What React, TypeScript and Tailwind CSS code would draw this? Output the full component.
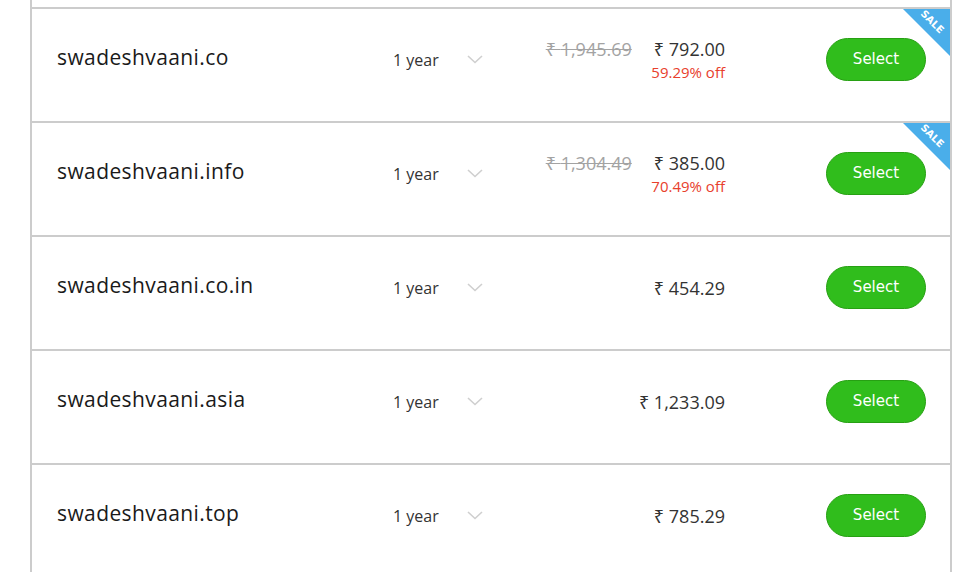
import React from "react";

type Row = {
  domain: string;
  price: string;
  old?: string;
  off?: string;
};

const rows: Row[] = [
  { domain: "swadeshvaani.co", old: "1,945.69", price: "792.00", off: "59.29% off" },
  { domain: "swadeshvaani.info", old: "1,304.49", price: "385.00", off: "70.49% off" },
  { domain: "swadeshvaani.co.in", price: "454.29" },
  { domain: "swadeshvaani.asia", price: "1,233.09" },
  { domain: "swadeshvaani.top", price: "785.29" },
];

const font = { fontFamily: '"Open Sans", "Noto Sans", sans-serif' };

function Chevron() {
  return (
    <svg width="16" height="9" viewBox="0 0 16 9" fill="none">
      <path d="M1 1l7 6.5L15 1" stroke="#cfcfcf" strokeWidth="1.6" />
    </svg>
  );
}

function SaleRibbon() {
  return (
    <div className="absolute top-0 right-0 w-[47px] h-[47px]">
      <svg width="47" height="47" viewBox="0 0 47 47" className="absolute top-0 right-0">
        <polygon points="0,0 47,0 47,47" fill="#4aaeea" />
      </svg>
      <div
        className="absolute left-[14px] top-[7px] w-[30px] h-[12px] flex items-center justify-center rotate-45 text-white font-bold text-[10px] leading-none"
        style={{ fontFamily: '"DejaVu Sans", sans-serif' }}
      >
        SALE
      </div>
    </div>
  );
}

function DomainRow({ r }: { r: Row }) {
  return (
    <div className="relative h-[114px] border-t-2 border-[#cccccc] pt-[29px]">
      {r.old && <SaleRibbon />}
      <div className="flex items-center h-[43px] pl-[25px] pr-[24px]">
        <div
          className="w-[336px] mb-[5px] text-[21px] leading-[21px] tracking-[0.4px] text-[#1a1a1a]"
          style={font}
        >
          {r.domain}
        </div>
        <div className="w-[90px] flex items-center text-[16px] text-[#333]" style={font}>
          <span>1 year</span>
          <span className="ml-auto">
            <Chevron />
          </span>
        </div>
        <div className="w-[242px] flex flex-col items-end text-[#333]" style={font}>
          <div className="flex items-center gap-[22px] text-[18px] leading-[22px]">
            {r.old && <span className="text-[#a3a3a3] line-through">₹ {r.old}</span>}
            <span>₹ {r.price}</span>
          </div>
          {r.off && (
            <div className="text-[15px] leading-[18px] mt-[3px] text-[#e8402c]">{r.off}</div>
          )}
        </div>
        <button
          className="ml-auto w-[100px] h-[43px] rounded-full bg-[#30bd1c] border border-[#27a013] text-white text-[15px]"
          style={{ fontFamily: '"DejaVu Sans", Verdana, sans-serif' }}
        >
          Select
        </button>
      </div>
    </div>
  );
}

export default function App() {
  return (
    <div className="w-[955px] h-[572px] overflow-hidden bg-white">
      <div className="ml-[30px] w-[922px] border-l-2 border-r-2 border-[#cccccc]">
        <div className="h-[7px]" />
        {rows.map((r) => (
          <DomainRow key={r.domain} r={r} />
        ))}
      </div>
    </div>
  );
}
